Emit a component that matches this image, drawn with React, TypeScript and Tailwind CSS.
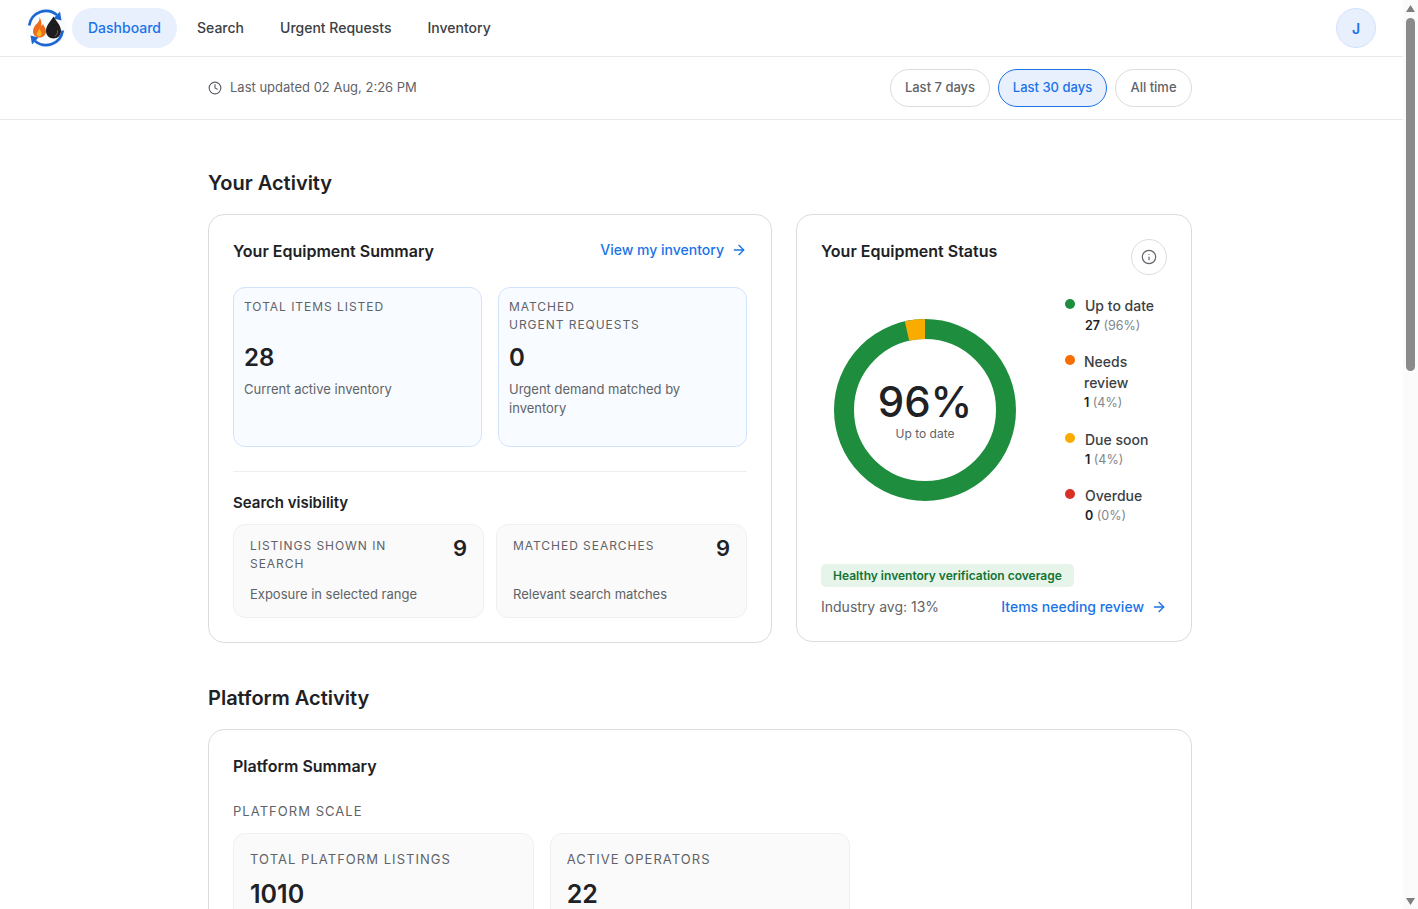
import { ArrowRight, Clock, Info } from "lucide-react";

const navItems = ["Search", "Urgent Requests", "Inventory"];

const legend = [
  { label: ["Up to date"], value: "27", pct: "(96%)", color: "bg-[#1e8e3e]" },
  { label: ["Needs", "review"], value: "1", pct: "(4%)", color: "bg-[#f96d00]" },
  { label: ["Due soon"], value: "1", pct: "(4%)", color: "bg-[#f9ab00]" },
  { label: ["Overdue"], value: "0", pct: "(0%)", color: "bg-[#d93025]" },
];

function Logo() {
  return (
    <svg width="42" height="42" viewBox="0 0 42 42" className="shrink-0">
      <circle cx="21" cy="21" r="20.5" fill="#fafbfd" />
      <path d="M4.2 18.5A17 17 0 0 1 32 8" fill="none" stroke="#1a66d2" strokeWidth="2.6" />
      <path d="M36.5 13.5L28.5 11.5L35 4.5Z" fill="#1a66d2" />
      <path d="M37.8 23.5A17 17 0 0 1 10 34" fill="none" stroke="#1a66d2" strokeWidth="2.6" />
      <path d="M5.5 28.5L13.5 30.5L7 37.5Z" fill="#1a66d2" />
      <path d="M14 10C15.5 13 13 15.5 11.5 17C9.5 19 8 21.5 8 24.5C8 28 10.8 30.5 14.5 30.5C18.5 30.5 21 27.8 21 24.5C21 21 19 19.5 18 17C17.5 18 17 18.8 16.3 19.3C16.8 16 16.3 12.5 14 10Z" fill="#ef6c1a" />
      <path d="M14.5 21.5C15 23.8 17 25 16.6 27C16.3 28.6 15.4 29.6 14.2 29.6C12.7 29.6 11.6 28.3 11.8 26.5C12 24.5 14 23.5 14.5 21.5Z" fill="#f9b81c" />
      <path d="M28.5 9.5C30.5 13.5 36 18 36 24C36 28.4 32.6 31.5 28.5 31.5C24.4 31.5 21 28.4 21 24C21 18 26.5 13.5 28.5 9.5Z" fill="#1d1d1f" />
      <path d="M32.5 23.5C33 26.5 31.5 28.5 30 29" fill="none" stroke="#6b6b6b" strokeWidth="1" />
    </svg>
  );
}

function Donut() {
  // amber slice is 1/28 of the ring, ending at twelve o'clock
  const a = (-360 / 28) * (Math.PI / 180);
  const ox = 91 + 91 * Math.sin(a);
  const oy = 91 - 91 * Math.cos(a);
  const ix = 91 + 71 * Math.sin(a);
  const iy = 91 - 71 * Math.cos(a);
  return (
    <svg width="182" height="182" viewBox="0 0 182 182" className="absolute inset-0">
      <circle cx="91" cy="91" r="81" fill="none" stroke="#1e8e3e" strokeWidth="20" />
      <path d={`M91 0A91 91 0 0 0 ${ox} ${oy}L${ix} ${iy}A71 71 0 0 1 91 20Z`} fill="#f9ab00" />
    </svg>
  );
}

function Label({ children, className = "" }: { children: React.ReactNode; className?: string }) {
  return <div className={`text-[12px] leading-[18px] tracking-[0.96px] text-[#5f6368] ${className}`}>{children}</div>;
}

function LinkArrow({ children }: { children: React.ReactNode }) {
  return (
    <a className="flex items-center gap-[7px] text-[14px] font-medium leading-5 text-[#1a73e8]">
      {children}
      <ArrowRight size={16} strokeWidth={2} />
    </a>
  );
}

function Scrollbar() {
  return (
    <div className="fixed inset-y-0 right-0 flex w-[15px] flex-col bg-[#fbfbfb] pl-[3px] pr-[3px]">
      <svg width="9" height="7" viewBox="0 0 18 14" className="mt-[5px] shrink-0">
        <path d="M9 0L18 14H0Z" fill="#7f7f7f" />
      </svg>
      <div className="mt-[6px] h-[353px] w-[9px] shrink-0 rounded-[5px] bg-[#8a8a8a]" />
      <svg width="9" height="7" viewBox="0 0 18 14" className="mb-[4px] mt-auto shrink-0">
        <path d="M9 14L18 0H0Z" fill="#7f7f7f" />
      </svg>
    </div>
  );
}

export default function App() {
  return (
    <div className="min-h-[2253px] w-[1403px] bg-white text-[#202124] font-['Inter',sans-serif]">
      <Scrollbar />
      <header className="flex h-[57px] items-center justify-between border-b border-[#e8eaed] pl-[25px] pr-[27px]">
        <div className="flex items-center">
          <Logo />
          <nav className="ml-[5px] flex items-center gap-1">
            <a className="flex h-10 items-center rounded-[20px] bg-[#e8f0fe] px-4 pb-[2px] text-[14px] font-medium text-[#1a73e8]">Dashboard</a>
            {navItems.map((item) => (
              <a key={item} className="flex h-10 items-center px-4 pb-[2px] text-[14px] font-medium text-[#3c4043]">
                {item}
              </a>
            ))}
          </nav>
        </div>
        <div className="flex h-10 w-10 items-center justify-center rounded-full border border-[#d2e3fc] bg-[#e8f0fe] text-[14px] font-semibold text-[#1a73e8]">J</div>
      </header>

      <div className="border-b border-[#e8eaed]">
        <div className="ml-[208px] flex h-[62px] w-[984px] items-center justify-between">
          <div className="flex items-center gap-2 text-[13px] text-[#5f6368]">
            <Clock size={14} strokeWidth={2} />
            Last updated 02 Aug, 2:26 PM
          </div>
          <div className="flex items-center gap-2 text-[13px] font-medium">
            <button className="h-[38px] w-[100px] rounded-[19px] border border-[#dadce0] bg-white text-[#5f6368]">Last 7 days</button>
            <button className="h-[38px] w-[109px] rounded-[19px] border border-[#1a73e8] bg-[#e8f0fe] text-[#1a73e8]">Last 30 days</button>
            <button className="h-[38px] w-[77px] rounded-[19px] border border-[#dadce0] bg-white text-[#5f6368]">All time</button>
          </div>
        </div>
      </div>

      <main className="ml-[208px] w-[984px] pt-[48px]">
        <h2 className="text-[20px] font-semibold leading-[30px] text-[#202124]">Your Activity</h2>

        <div className="mt-4 flex items-start gap-6">
          <section className="h-[429px] w-[564px] rounded-2xl border border-[#dadce0] bg-white p-6">
            <div className="flex h-[24px] items-start justify-between">
              <h3 className="text-[16px] font-semibold leading-6">Your Equipment Summary</h3>
              <div className="mt-[1px]">
                <LinkArrow>View my inventory</LinkArrow>
              </div>
            </div>
            <div className="mt-[24px] grid grid-cols-2 gap-4">
              <div className="h-[160px] rounded-xl border border-[#d2e3fc] bg-[#f8fbff] px-[10px] pt-[10px]">
                <Label>TOTAL ITEMS LISTED</Label>
                <div className="mt-[14px] h-[36px] pt-[10px] text-[24px] font-semibold leading-[36px]">28</div>
                <p className="mt-[14px] text-[13px] leading-[19px] text-[#5f6368]">Current active inventory</p>
              </div>
              <div className="h-[160px] rounded-xl border border-[#d2e3fc] bg-[#f8fbff] px-[10px] pt-[10px]">
                <Label>
                  MATCHED
                  <br />
                  URGENT REQUESTS
                </Label>
                <div className="mt-[-4px] h-[36px] pt-[10px] text-[24px] font-semibold leading-[36px]">0</div>
                <p className="mt-[14px] text-[13px] leading-[19px] text-[#5f6368]">Urgent demand matched by inventory</p>
              </div>
            </div>
            <div className="mt-6 border-t border-[#eceef1] pt-[21px]">
              <h4 className="text-[15px] font-semibold leading-5">Search visibility</h4>
              <div className="mt-[11px] grid grid-cols-2 gap-3">
                <div className="h-[94px] rounded-xl border border-[#eef0f2] bg-[#fafafa] px-4 pt-3">
                  <div className="flex items-start justify-between">
                    <Label className="w-[170px]">LISTINGS SHOWN IN SEARCH</Label>
                    <span className="mt-[-1px] text-[22px] font-semibold leading-[24px]">9</span>
                  </div>
                  <p className="mt-[12px] text-[13px] leading-[19px] text-[#5f6368]">Exposure in selected range</p>
                </div>
                <div className="h-[94px] rounded-xl border border-[#eef0f2] bg-[#fafafa] px-4 pt-3">
                  <div className="flex h-[36px] items-start justify-between">
                    <Label>MATCHED SEARCHES</Label>
                    <span className="mt-[-1px] text-[22px] font-semibold leading-[24px]">9</span>
                  </div>
                  <p className="mt-[12px] text-[13px] leading-[19px] text-[#5f6368]">Relevant search matches</p>
                </div>
              </div>
            </div>
          </section>

          <section className="h-[428px] w-[396px] rounded-2xl border border-[#dadce0] bg-white p-6">
            <div className="flex items-start justify-between">
              <h3 className="text-[16px] font-semibold leading-6">Your Equipment Status</h3>
              <button className="flex h-9 w-9 items-center justify-center rounded-full border border-[#dadce0] text-[#5f6368]">
                <Info size={16} strokeWidth={1.75} />
              </button>
            </div>
            <div className="mt-[20px] flex h-[256px] items-start">
              <div className="relative ml-[13px] mt-[24px] h-[182px] w-[182px] shrink-0">
                <Donut />
                <div className="absolute inset-0 flex flex-col items-center justify-center">
                  <div className="mt-[1px] text-[42px] font-medium leading-[44px] text-[#202124]">96%</div>
                  <div className="mt-[3px] text-[12px] leading-[14px] text-[#5f6368]">Up to date</div>
                </div>
              </div>
              <ul className="ml-[49px] flex flex-col gap-[16px]">
                {legend.map((l) => (
                  <li key={l.label[0]} className={`flex items-start gap-[10px] ${l.label.length > 1 ? "pb-px" : ""}`}>
                    <span className={`mt-[4px] h-[10px] w-[10px] shrink-0 rounded-full ${l.color}`} />
                    <div className={l.label.length > 1 ? "-ml-px" : ""}>
                      {l.label.map((t) => (
                        <div key={t} className="text-[14px] font-medium leading-[21px] text-[#3c4043]">
                          {t}
                        </div>
                      ))}
                      <div className="pt-px text-[12.5px] leading-[18px] text-[#80868b]">
                        <span className="font-semibold text-[#202124]">{l.value}</span> {l.pct}
                      </div>
                    </div>
                  </li>
                ))}
              </ul>
            </div>
            <div className="mt-[13px] inline-block h-[23px] rounded-[5px] bg-[#e6f4ea] px-3 text-[12px] font-semibold leading-[23px] text-[#137333]">
              Healthy inventory verification coverage
            </div>
            <div className="mt-[9px] flex items-center justify-between">
              <span className="text-[14px] text-[#5f6368]">Industry avg: 13%</span>
              <LinkArrow>Items needing review</LinkArrow>
            </div>
          </section>
        </div>

        <h2 className="mt-[40px] text-[20px] font-semibold leading-[30px] text-[#202124]">Platform Activity</h2>

        <section className="mt-4 h-[600px] rounded-2xl border border-[#dadce0] bg-white p-6">
          <h3 className="text-[16px] font-semibold leading-6">Platform Summary</h3>
          <div className="mt-[24px] text-[13px] leading-[18px] tracking-[1.04px] text-[#5f6368]">PLATFORM SCALE</div>
          <div className="mt-[13px] grid grid-cols-3 gap-4">
            <div className="h-[160px] rounded-xl border border-[#eef0f2] bg-[#fafafa] px-4 pt-[16px]">
              <div className="text-[13px] leading-[18px] tracking-[1.04px] text-[#5f6368]">TOTAL PLATFORM LISTINGS</div>
              <div className="mt-[8px] text-[25px] font-semibold leading-[36px]">1010</div>
            </div>
            <div className="h-[160px] rounded-xl border border-[#eef0f2] bg-[#fafafa] px-4 pt-[16px]">
              <div className="text-[13px] leading-[18px] tracking-[1.04px] text-[#5f6368]">ACTIVE OPERATORS</div>
              <div className="mt-[8px] text-[25px] font-semibold leading-[36px]">22</div>
            </div>
          </div>
        </section>
      </main>
    </div>
  );
}
